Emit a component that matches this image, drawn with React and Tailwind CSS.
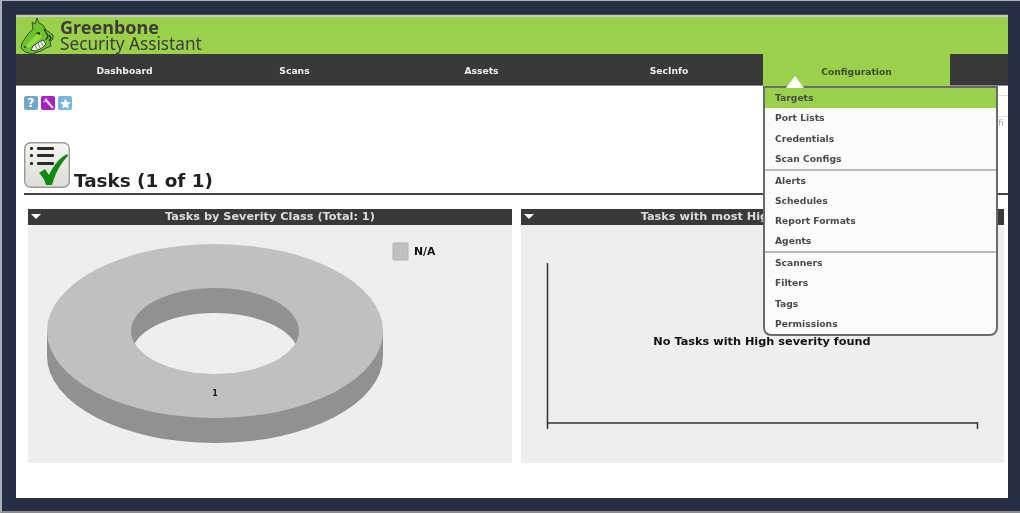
import React from "react";

const dejavu = "font-['DejaVu_Sans',sans-serif]";

const navItems = [
  { label: "Dashboard", className: "w-[185px] pl-8" },
  { label: "Scans", className: "w-[187px]" },
  { label: "Assets", className: "w-[187px]" },
  { label: "SecInfo", className: "w-[188px]" },
];

const menuGroups = [
  { height: "h-[83px] border-b-2 border-[#b8b8b8]", items: ["Targets", "Port Lists", "Credentials", "Scan Configs"] },
  { height: "h-[82px] border-b-2 border-[#b8b8b8]", items: ["Alerts", "Schedules", "Report Formats", "Agents"] },
  { height: "h-[81px]", items: ["Scanners", "Filters", "Tags", "Permissions"] },
];

function DragonLogo() {
  return (
    <svg width="36" height="38" viewBox="0 0 36 38" className="shrink-0">
      <path d="M17 1 L19 6 L23 8 L26 13 L29 15 L33 18 L33 22 L30 25 L31 29 L26 31 L21 34 L12 37 L5 35 L1 31 L2 26 L8 17 L13 12 L12 5 L15 7 Z" fill="#6cc229" stroke="#3c4a2a" strokeWidth="1" strokeLinejoin="round" />
      <path d="M6 28 L14 20 L19 15 L22 20 L17 25 L9 31 Z" fill="#8bdc3f" />
      <path d="M13 29 L19 25 L23 23 L26 27 L22 31 L15 34 L11 33 Z" fill="#f2f4ec" stroke="#3c4a2a" strokeWidth="1" />
      <path d="M15 28 L17 32 M18 26 L20 31 M21 25 L23 29" stroke="#6a6f60" strokeWidth="0.8" />
      <path d="M15 16 L20 15 L20 18 Z" fill="#2f3a22" />
      <path d="M24 12 L28 19 L26 23 M29 18 L31 21 L29 24" fill="none" stroke="#2f3a22" strokeWidth="1.4" />
      <circle cx="5" cy="30" r="1" fill="#2f3a22" />
    </svg>
  );
}

function ToolIcon({ bg, children }) {
  return (
    <div className={`w-[14px] h-[14px] rounded-[2px] flex items-center justify-center ${bg}`}>
      {children}
    </div>
  );
}

function TaskIcon() {
  return (
    <svg width="46" height="46" viewBox="0 0 46 46" className="shrink-0">
      <defs>
        <linearGradient id="taskBg" x1="0" y1="0" x2="0" y2="1">
          <stop offset="0" stopColor="#f6f6f2" />
          <stop offset="1" stopColor="#dcdcd6" />
        </linearGradient>
      </defs>
      <rect x="0.7" y="0.7" width="44.6" height="44.6" rx="6" fill="url(#taskBg)" stroke="#9a9a96" strokeWidth="1.4" />
      <g fill="#2b2b2b">
        <rect x="6" y="5" width="3" height="3" rx="1" />
        <rect x="13" y="5" width="17" height="3" rx="1" />
        <rect x="6" y="12" width="3" height="3" rx="1" />
        <rect x="13" y="12" width="17" height="3" rx="1" />
        <rect x="6" y="20" width="3" height="3" rx="1" />
        <rect x="13" y="20" width="17" height="3" rx="1" />
      </g>
      <path d="M15 31 L21 27 L25 33 C29 24 35 16 43 12 L44 14 C36 22 31 32 28 43 L22 43 C21 38 18 34 15 31 Z" fill="#0f8a0f" />
    </svg>
  );
}

function PanelHeader({ title }) {
  return (
    <div className="relative h-4 bg-[#3a3838] flex items-center justify-center whitespace-nowrap text-[#dcdcdc] text-[11.3px] font-bold">
      <span className="absolute left-[3px] top-[5px] w-0 h-0 border-x-[5px] border-t-[5px] border-x-transparent border-t-white" />
      {title}
    </div>
  );
}

function SeverityChart() {
  return (
    <svg width="484" height="238" viewBox="28 225 484 238" className="block">
      <path d="M47 331 L47 356 A168 87 0 0 0 383 356 L383 331 Z" fill="#919191" />
      <ellipse cx="215" cy="331" rx="168" ry="87" fill="#c0c0c0" />
      <ellipse cx="215" cy="331" rx="84" ry="43" fill="#919191" />
      <clipPath id="holeClip">
        <ellipse cx="215" cy="331" rx="84" ry="43" />
      </clipPath>
      <ellipse cx="215" cy="356" rx="84" ry="43" fill="#eeeeee" clipPath="url(#holeClip)" />
      <text x="215" y="396" textAnchor="middle" fontSize="8" fontWeight="700" fill="#111">1</text>
      <rect x="393" y="243" width="15" height="17" rx="1" fill="#c0c0c0" stroke="#b0b0b0" />
      <text x="414" y="255" fontSize="10.800" fontWeight="700" fill="#111">N/A</text>
    </svg>
  );
}

function HighSeverityChart() {
  return (
    <svg width="483" height="238" viewBox="521 225 483 238" className="block">
      <path d="M547.5 263 V429 M547.500 423 H977.500 V429" fill="none" stroke="#333" strokeWidth="1.5" />
      <text x="762" y="345" textAnchor="middle" fontSize="11.300" fontWeight="700" fill="#111">No Tasks with High severity found</text>
    </svg>
  );
}

function ConfigMenu() {
  return (
    <div className="absolute left-[747px] top-[72px] w-[235px] h-[250px] bg-[#fbfbfb] border-2 border-[#6a6a6a] rounded-b-lg text-[#4a4a4a] text-[9.2px] font-bold flex flex-col">
      <span className="absolute -top-[12px] left-[21px] w-0 h-0 border-x-[9px] border-b-[12px] border-x-transparent border-b-white" />
      {menuGroups.map((group) => (
        <div key={group.items[0]} className={`flex flex-col ${group.height}`}>
          {group.items.map((item) => (
            <div key={item} className={`flex-1 flex items-center pl-[10px] ${item === "Targets" ? "bg-[#9bd14a]" : ""}`}>
              {item}
            </div>
          ))}
        </div>
      ))}
    </div>
  );
}

export default function App() {
  return (
    <div className={`w-[1020px] h-[513px] overflow-hidden bg-[#272f45] border-l-2 border-t border-b-2 border-l-[#aab0bc] border-t-[#aab0bc] border-b-[#8a8a8a] pl-[14px] pr-3 pt-[13px] ${dejavu}`}>
      <div className="relative h-[484px] bg-white blur-[0.4px]">
        <div className="h-[3px] bg-[#c8c8c8] border-t border-[#555]" />

        {/* Header */}
        <div className="h-[37px] bg-[#9bd14a] flex items-center pl-1 gap-1">
          <DragonLogo />
          <div className="font-['Noto_Sans',sans-serif] text-[#3c3c3c] -mt-[1px]">
            <div className="text-[18px] font-bold leading-[16px]">Greenbone</div>
            <div className="text-[17.2px] leading-[17px]">Security Assistant</div>
          </div>
        </div>

        {/* Nav */}
        <div className="h-[32px] bg-[#3a3838] border-b border-[#8a8a8a] flex text-[9.2px] font-bold text-[#eeeeee]">
          {navItems.map((item) => (
            <div key={item.label} className={`flex items-center justify-center pt-[3px] ${item.className}`}>
              {item.label}
            </div>
          ))}
          <div className="w-[187px] h-[32px] pt-[3px] bg-[#9bd14a] text-[#3f4a2c] flex items-center justify-center">
            Configuration
          </div>
        </div>

        {/* Toolbar */}
        <div className="flex justify-between pl-2 pt-[10px] h-[24px]">
          <div className="flex gap-[3px]">
            <ToolIcon bg="bg-[#6fa8c8]">
              <span className="text-white text-[12px] font-bold leading-none">?</span>
            </ToolIcon>
            <ToolIcon bg="bg-[#a51fc4]">
              <svg width="12" height="12" viewBox="0 0 12 12">
                <path d="M3 2 L11 11" stroke="#f0e4f5" strokeWidth="2" />
                <path d="M1 5 L4 4 L5 1" fill="none" stroke="#e3b8ef" strokeWidth="1" />
              </svg>
            </ToolIcon>
            <ToolIcon bg="bg-[#74b8dc]">
              <svg width="11" height="11" viewBox="0 0 24 24" fill="#fff">
                <path d="M12 1 L15.500 8.500 L23.500 9.500 L17.500 15 L19 23 L12 19 L5 23 L6.500 15 L0.500 9.500 L8.500 8.500 Z" />
              </svg>
            </ToolIcon>
          </div>
          <div className="w-[10px] -mt-[1px] border-t border-[#dddddd] text-[9px] text-[#aaaaaa]">
            <div className="border-t border-[#dddddd] mt-[20px] pt-[2px] leading-none">fi</div>
          </div>
        </div>

        {/* Title */}
        <div className="mt-8 ml-2 flex items-end gap-1 pb-[5px] border-b-2 border-[#444]">
          <TaskIcon />
          <h1 className="text-[18.4px] font-bold text-[#222] leading-none -mb-[2px]">Tasks (1 of 1)</h1>
        </div>

        {/* Charts */}
        <div className="mt-[14px] pl-3 flex gap-[9px]">
          <div className="w-[484px]">
            <PanelHeader title="Tasks by Severity Class (Total: 1)" />
            <div className="bg-[#eeeeee]">
              <SeverityChart />
            </div>
          </div>
          <div className="w-[483px]">
            <PanelHeader title="Tasks with most High Severity Results" />
            <div className="bg-[#eeeeee]">
              <HighSeverityChart />
            </div>
          </div>
        </div>

        <ConfigMenu />
      </div>
    </div>
  );
}
